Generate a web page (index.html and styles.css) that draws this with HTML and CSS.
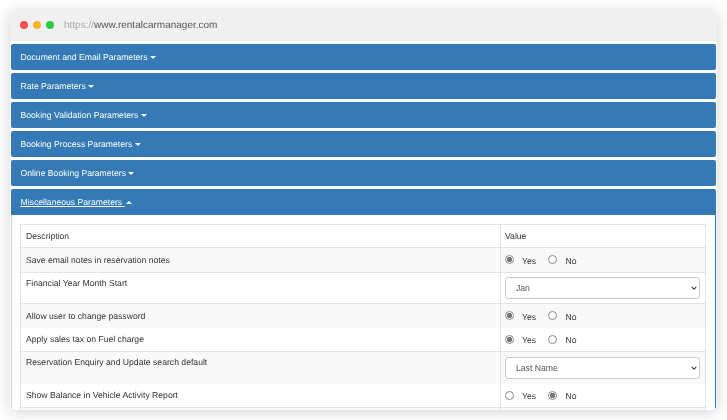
FILE: index.html
```html
<!DOCTYPE html>
<html lang="en">
<head>
<meta charset="utf-8">
<title>Rental Car Manager</title>
<link rel="stylesheet" href="styles.css">
</head>
<body>
<div class="window">
  <div class="toolbar">
    <span class="dot red"></span><span class="dot amber"></span><span class="dot green"></span>
    <span class="url"><span class="scheme">https://</span>www.rentalcarmanager.com</span>
  </div>
  <div class="content">
    <div class="heading"><a>Document and Email Parameters</a><span class="caret"></span></div>
    <div class="heading"><a>Rate Parameters</a><span class="caret"></span></div>
    <div class="heading"><a>Booking Validation Parameters</a><span class="caret"></span></div>
    <div class="heading"><a>Booking Process Parameters</a><span class="caret"></span></div>
    <div class="heading"><a>Online Booking Parameters</a><span class="caret"></span></div>
    <div class="panel">
      <div class="heading open"><a class="active">Miscellaneous Parameters&nbsp;</a><span class="caret up"></span></div>
      <div class="panel-body">
        <div class="table">
          <div class="row head"><div class="desc">Description</div><div class="val">Value</div></div>
          <div class="row alt line r1">
            <div class="desc">Save email notes in reservation notes</div>
            <div class="val radios"><input type="radio" name="a" checked><label>Yes</label><input type="radio" name="a"><label>No</label></div>
          </div>
          <div class="row line r2">
            <div class="desc top">Financial Year Month Start</div>
            <div class="val sel"><div class="select-wrap"><select><option>Jan</option></select><svg class="chev" viewBox="0 0 6 4"><path d="M.7.8 3 3.1 5.3.8" fill="none" stroke="#444" stroke-width="1.1"/></svg></div></div>
          </div>
          <div class="row alt r3">
            <div class="desc">Allow user to change password</div>
            <div class="val radios"><input type="radio" name="b" checked><label>Yes</label><input type="radio" name="b"><label>No</label></div>
          </div>
          <div class="row line r3">
            <div class="desc">Apply sales tax on Fuel charge</div>
            <div class="val radios"><input type="radio" name="c" checked><label>Yes</label><input type="radio" name="c"><label>No</label></div>
          </div>
          <div class="row alt r5">
            <div class="desc top">Reservation Enquiry and Update search default</div>
            <div class="val sel"><div class="select-wrap"><select><option>Last Name</option></select><svg class="chev" viewBox="0 0 6 4"><path d="M.7.8 3 3.1 5.3.8" fill="none" stroke="#444" stroke-width="1.1"/></svg></div></div>
          </div>
          <div class="row line r3">
            <div class="desc">Show Balance in Vehicle Activity Report</div>
            <div class="val radios"><input type="radio" name="d"><label>Yes</label><input type="radio" name="d" checked><label>No</label></div>
          </div>
          <div class="row alt r3"><div class="desc"></div><div class="val"></div></div>
        </div>
      </div>
    </div>
  </div>
</div>
</body>
</html>
```
FILE: styles.css
```css
* { box-sizing: border-box; }
html, body { margin: 0; height: 420px; overflow: hidden; background: #fff; }
body {
  padding: 10px;
  font-family: "Liberation Sans", Arial, sans-serif;
  font-size: 8.65px;
  color: #333;
  text-rendering: geometricPrecision;
}
.window {
  height: 400px;
  border-radius: 6px;
  background: #fff;
  overflow: hidden;
  box-shadow: 0 2px 16px rgba(0, 0, 0, .18);
  filter: blur(.3px);
}
.toolbar {
  height: 31px;
  background: #f0f0f0;
  display: flex;
  align-items: center;
  padding: 0 0 0 10px;
}
.dot { width: 8px; height: 8px; border-radius: 50%; margin-right: 5px; position: relative; top: -.5px; }
.red { background: #fc4f4f; }
.amber { background: #fdb52e; }
.green { background: #2ccb43; }
.url { margin-left: 5px; font-size: 10px; color: #555; }
.scheme { color: #aaa; }
.content { padding: 3px 1px 0; }
.heading {
  height: 26px;
  background: #337ab7;
  color: #fff;
  border-radius: 2px;
  margin-bottom: 3px;
  padding-left: 9.5px;
  display: flex;
  align-items: center;
  font-size: 8.65px;
}
.heading.open { margin-bottom: 0; border-radius: 2px 2px 0 0; }
.active { text-decoration: underline; }
.caret {
  margin-left: 2.5px;
  width: 0;
  height: 0;
  border-left: 3px solid transparent;
  border-right: 3px solid transparent;
  border-top: 3px solid #fff;
}
.caret.up { margin-left: 1px; border-top: 0; border-bottom: 3px solid #fff; }
.panel-body {
  border-left: 1px solid #bcd4ea;
  border-right: 1px solid #337ab7;
  padding: 9px 9px 0 8px;
  height: 200px;
  overflow: hidden;
}
.table { border: 1px solid #e3e3e3; border-bottom: 0; }
.row { display: flex; height: 23px; }
.head { height: 23px; border-bottom: 1px solid #e3e3e3; }
.desc {
  width: 480px;
  padding: 0 0 1px 5px;
  display: flex;
  align-items: center;
  border-right: 1px solid #e3e3e3;
  flex: none;
}
.desc.top { align-items: flex-start; padding-top: 5px; }
.val { flex: 1; padding: 0 5px 0 4px; display: flex; align-items: center; }
.alt { background: #f9f9f9; }
.line { border-bottom: 1px solid #e3e3e3; }
.r1 { height: 25px; }
.r2 { height: 31px; }
.r3 { height: 24px; }
.r5 { height: 32px; }
.radios input {
  appearance: none;
  width: 9px;
  height: 9px;
  margin: 0;
  border: 1px solid #888;
  border-radius: 50%;
  background: #fff;
  position: relative;
  top: -.5px;
}
.radios input:checked { background: radial-gradient(circle, #777 0 2.4px, #fff 3px); }
.radios label { margin: 0 0 0 8px; width: 25.5px; position: relative; top: .5px; }
.radios label:last-child { margin-left: 9px; }
.select-wrap { position: relative; width: 100%; }
select {
  display: block;
  appearance: none;
  width: 100%;
  height: 22px;
  border: 1px solid #ccc;
  border-radius: 3px;
  background: #fff;
  color: #555;
  padding: 0 10px;
  font: 8.65px "Liberation Sans", Arial, sans-serif;
}
.chev {
  position: absolute;
  right: 3.5px;
  top: 9px;
  width: 6px;
  height: 4px;
}
```
